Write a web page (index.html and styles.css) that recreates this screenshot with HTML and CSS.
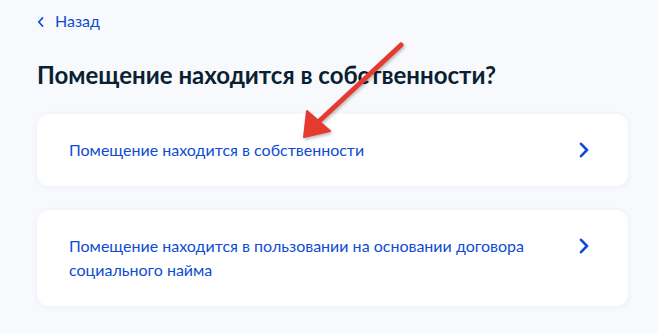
FILE: index.html
```html
<!DOCTYPE html>
<html lang="ru">
<head>
<meta charset="utf-8">
<link rel="stylesheet" href="styles.css">
</head>
<body>
<div class="page">
  <a class="back" href="#">
    <svg class="back-icon" width="7" height="10" viewBox="0 0 7 10"><path d="M5.5 1 L1.8 5 L5.5 9" fill="none" stroke="#0d4cd3" stroke-width="1.8" stroke-linecap="round" stroke-linejoin="round"/></svg>
    <span>Назад</span>
  </a>
  <h1 class="title">Помещение находится в собственности?</h1>
  <div class="options">
    <a class="card" href="#">
      <span class="card-text">Помещение находится в собственности</span>
      <span class="card-chevron"><svg width="12" height="16" viewBox="0 0 12 16"><path d="M3 1.8 L9 8 L3 14.2" fill="none" stroke="#0d4cd3" stroke-width="2.6" stroke-linecap="round" stroke-linejoin="round"/></svg></span>
    </a>
    <a class="card" href="#">
      <span class="card-text">Помещение находится в пользовании на основании договора социального найма</span>
      <span class="card-chevron"><svg width="12" height="16" viewBox="0 0 12 16"><path d="M3 1.8 L9 8 L3 14.2" fill="none" stroke="#0d4cd3" stroke-width="2.6" stroke-linecap="round" stroke-linejoin="round"/></svg></span>
    </a>
  </div>
  <svg class="pointer" width="658" height="334" viewBox="0 0 658 334">
    <g class="pointer-g">
      <path d="M401 45 L315 125" stroke="#e53a30" stroke-width="5" stroke-linecap="round"/>
      <polygon points="304,137 307,111 330,131" fill="#e53a30" stroke="#e53a30" stroke-width="2" stroke-linejoin="round"/>
    </g>
  </svg>
</div>
</body>
</html>
```

FILE: styles.css
```css
html, body {
  margin: 0;
  padding: 0;
  background: #f7f9fc;
}
body {
  font-family: Lato, "Noto Sans", sans-serif;
  color: #0b1f33;
}
.page {
  position: relative;
  width: 658px;
  height: 334px;
  box-sizing: border-box;
  padding: 9px 30px 0 37px;
  overflow: hidden;
}
.back {
  display: inline-flex;
  align-items: center;
  gap: 11px;
  color: #0d4cd3;
  text-decoration: none;
  font-size: 16px;
  line-height: 24px;
  height: 24px;
}
.back-icon {
  display: block;
  margin-top: 2px;
}
.title {
  margin: 26px 0 23px;
  font-size: 24px;
  line-height: 32px;
  font-weight: 700;
  color: #0b1f33;
}
.options {
  display: flex;
  flex-direction: column;
  gap: 24px;
}
.card {
  display: flex;
  align-items: flex-start;
  gap: 24px;
  background: #ffffff;
  border-radius: 12px;
  padding: 24px 32px 24px 32px;
  text-decoration: none;
  box-shadow: 0 1px 6px rgba(40, 60, 120, 0.06);
}
.card-text {
  flex: 1;
  font-size: 16px;
  line-height: 24px;
  color: #0d4cd3;
}
.card-chevron {
  width: 24px;
  height: 24px;
  display: flex;
  align-items: center;
  justify-content: center;
}
.pointer {
  position: absolute;
  left: 0;
  top: 0;
  pointer-events: none;
}
.pointer-g {
  filter: drop-shadow(1px 2px 1.5px rgba(0, 0, 0, 0.25));
}
```
